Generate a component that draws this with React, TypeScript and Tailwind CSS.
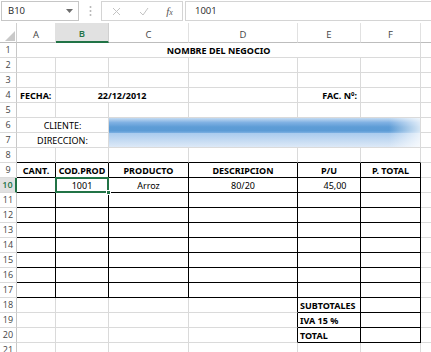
import React from 'react';

type Bd = 'g' | 'k' | 'n';
type Al = 'l' | 'c' | 'r' | 'e' | 'x';
type Cell = { s?: number; t?: string; a?: Al; b?: boolean; r?: Bd; d?: Bd; fill?: 1 | 2; sel?: boolean };

const RB: Record<Bd, string> = { g: 'border-r border-r-[#dadada]', k: 'border-r border-r-black', n: '' };
const DB: Record<Bd, string> = { g: 'border-b border-b-[#dadada]', k: 'border-b border-b-black', n: '' };
const AL: Record<Al, string> = {
  l: 'justify-start pl-[3px]',
  c: 'justify-center',
  r: 'justify-end pr-[3px]',
  e: 'justify-center pl-[12px]',
  x: 'justify-start pl-[2px]',
};
const SPAN: Record<number, string> = {
  1: 'col-span-1',
  2: 'col-span-2',
  3: 'col-span-3',
  4: 'col-span-4',
  5: 'col-span-5',
  6: 'col-span-6',
};
const FILL: Record<number, string> = {
  1: 'bg-[image:linear-gradient(90deg,rgba(255,255,255,0)_90%,rgba(255,255,255,0.75)_100%),linear-gradient(180deg,#c4dbf2_0%,#80b1e3_30%,#5d9cd6_60%,#5b9bd5_85%,#7db0e2_100%)]',
  2: 'bg-[image:linear-gradient(90deg,rgba(255,255,255,0)_90%,rgba(255,255,255,0.75)_100%),linear-gradient(180deg,#a9cbee_0%,#c3daf2_50%,#dde9f7_100%)]',
};

const def = (n: number, extra: Cell = {}): Cell[] => Array.from({ length: n }, () => ({ ...extra }));
const tbl = (texts: string[], bold = false, al: Al = 'c'): Cell[] =>
  texts.map((t) => ({ t, b: bold, a: al, r: 'k' as Bd, d: 'k' as Bd }));

const rows: Cell[][] = [
  [{ s: 6, t: 'NOMBRE DEL NEGOCIO', b: true, a: 'c' }],
  def(6),
  def(6),
  [
    { t: 'FECHA:', b: true, a: 'l' },
    { s: 2, t: '22/12/2012', b: true, a: 'c' },
    {},
    { t: 'FAC. Nº:', b: true, a: 'r' },
    {},
  ],
  def(6),
  [
    { s: 2, t: 'CLIENTE:', a: 'c' },
    { s: 4, fill: 1, d: 'n' },
  ],
  [
    { s: 2, t: 'DIRECCION:', a: 'c' },
    { s: 4, fill: 2 },
  ],
  def(6, { d: 'k' }),
  tbl(['CANT.', 'COD.PROD', 'PRODUCTO', 'DESCRIPCION', 'P/U', 'P. TOTAL'], true),
  [
    { r: 'k', d: 'k' },
    { t: '1001', a: 'c', r: 'k', d: 'k', sel: true },
    { t: 'Arroz', a: 'c', r: 'k', d: 'k' },
    { t: '80/20', a: 'c', r: 'k', d: 'k' },
    { t: '45,00', a: 'e', r: 'k', d: 'k' },
    { r: 'k', d: 'k' },
  ],
  def(6, { r: 'k', d: 'k' }),
  def(6, { r: 'k', d: 'k' }),
  def(6, { r: 'k', d: 'k' }),
  def(6, { r: 'k', d: 'k' }),
  def(6, { r: 'k', d: 'k' }),
  def(6, { r: 'k', d: 'k' }),
  def(6, { r: 'k', d: 'k' }),
  [{}, {}, {}, { r: 'k' }, { t: 'SUBTOTALES', b: true, a: 'x', r: 'k', d: 'k' }, { r: 'k', d: 'k' }],
  [{}, {}, {}, { r: 'k' }, { t: 'IVA 15 %', b: true, a: 'x', r: 'k', d: 'k' }, { r: 'k', d: 'k' }],
  [{}, {}, {}, { r: 'k' }, { t: 'TOTAL', b: true, a: 'x', r: 'k', d: 'k' }, { r: 'k', d: 'k' }],
  def(6),
];

const COLS = ['A', 'B', 'C', 'D', 'E', 'F'];

function Dots() {
  return (
    <svg width="3" height="12" viewBox="0 0 3 12">
      <circle cx="1.5" cy="2" r="1" fill="#b5b5b5" />
      <circle cx="1.5" cy="6" r="1" fill="#b5b5b5" />
      <circle cx="1.5" cy="10" r="1" fill="#b5b5b5" />
    </svg>
  );
}

export default function App() {
  return (
    <div className="w-[431px] h-[352px] overflow-hidden bg-white">
      {/* Formula bar */}
      <div className="h-[23px] flex items-start pt-[1px] font-['Open_Sans',sans-serif] text-[9.5px] text-[#262626]">
        <div className="ml-[1px] w-[78px] h-[20px] border border-[#c6c6c6] flex items-center pl-[6px] pr-[5px]">
          <span>B10</span>
          <svg className="ml-auto" width="7" height="4" viewBox="0 0 7 4">
            <path d="M0 0h7L3.5 4z" fill="#6d6d6d" />
          </svg>
        </div>
        <div className="w-[22px] h-[20px] flex items-center justify-center">
          <Dots />
        </div>
        <div className="w-[82px] h-[20px] border border-[#d4d4d4] flex items-center">
          <div className="w-[28px] flex justify-center">
            <svg width="9" height="9" viewBox="0 0 9 9">
              <path d="M1 1l7 7M8 1L1 8" stroke="#c3c3c3" strokeWidth="1" />
            </svg>
          </div>
          <div className="w-[27px] flex justify-center">
            <svg width="10" height="9" viewBox="0 0 10 9">
              <path d="M1 5l3 3 5-7" stroke="#c3c3c3" strokeWidth="1" fill="none" />
            </svg>
          </div>
          <div className="w-[25px] flex justify-center font-['Liberation_Serif',serif] italic text-[11px] text-[#555] leading-none">
            <span>f</span>
            <span className="text-[8px] mt-[3px]">x</span>
          </div>
        </div>
        <div className="ml-[2px] flex-1 h-[20px] border border-[#d4d4d4] border-r-0 flex items-center pl-[9px]">1001</div>
      </div>

      {/* Sheet grid */}
      <div className="grid grid-cols-[17px_39px_53px_80px_109px_63px_60px_1fr] grid-rows-[20px_repeat(21,15px)]">
        {/* column header row */}
        <div className="relative border-r border-r-[#d0d0d0] border-b border-b-[#bdbdbd]">
          <svg className="absolute left-[5px] top-[8px]" width="10" height="10" viewBox="0 0 10 10">
            <path d="M10 0V10H0z" fill="#c9c9c9" />
          </svg>
        </div>
        {COLS.map((c) =>
          c === 'B' ? (
            <div
              key={c}
              className="flex items-center justify-center pt-[5px] bg-[#e1e1e1] border-r border-r-[#d0d0d0] border-b-2 border-b-[#217346] font-['Open_Sans',sans-serif] text-[9.5px] text-[#217346] font-semibold"
            >
              {c}
            </div>
          ) : (
            <div
              key={c}
              className="flex items-center justify-center pt-[6px] border-r border-r-[#e1e1e1] border-b border-b-[#bdbdbd] font-['Open_Sans',sans-serif] text-[9.5px] text-[#444]"
            >
              {c}
            </div>
          )
        )}
        <div className="border-b border-b-[#bdbdbd]" />

        {rows.map((cells, i) => {
          const n = i + 1;
          const active = n === 10;
          return (
            <React.Fragment key={n}>
              <div
                className={
                  active
                    ? "flex items-center justify-center bg-[#e1e1e1] border-r-2 border-r-[#217346] border-b border-b-[#dadada] font-['Open_Sans',sans-serif] text-[9px] text-[#217346] font-semibold"
                    : "flex items-center justify-center border-r border-r-[#c8c8c8] border-b border-b-[#dadada] font-['Open_Sans',sans-serif] text-[9px] text-[#444]"
                }
              >
                {n}
              </div>
              {cells.map((c, j) => (
                <div
                  key={j}
                  className={[
                    'relative flex items-center pt-[1px] whitespace-nowrap font-[\'Liberation_Sans\',Arial,sans-serif] text-[9px] text-black',
                    SPAN[c.s ?? 1],
                    RB[c.r ?? 'g'],
                    DB[c.d ?? 'g'],
                    AL[c.a ?? 'c'],
                    c.b ? 'font-bold' : '',
                    c.fill ? FILL[c.fill] : '',
                  ].join(' ')}
                >
                  {c.t}
                  {c.sel && (
                    <>
                      <div className="absolute -left-[1px] -top-[1px] -right-[1px] -bottom-[1px] border-2 border-[#217346] z-10" />
                      <div className="absolute -right-[3px] -bottom-[3px] w-[5px] h-[5px] bg-[#217346] border border-white z-20" />
                    </>
                  )}
                </div>
              ))}
              <div className="border-b border-b-[#dadada]" />
            </React.Fragment>
          );
        })}
      </div>
    </div>
  );
}
